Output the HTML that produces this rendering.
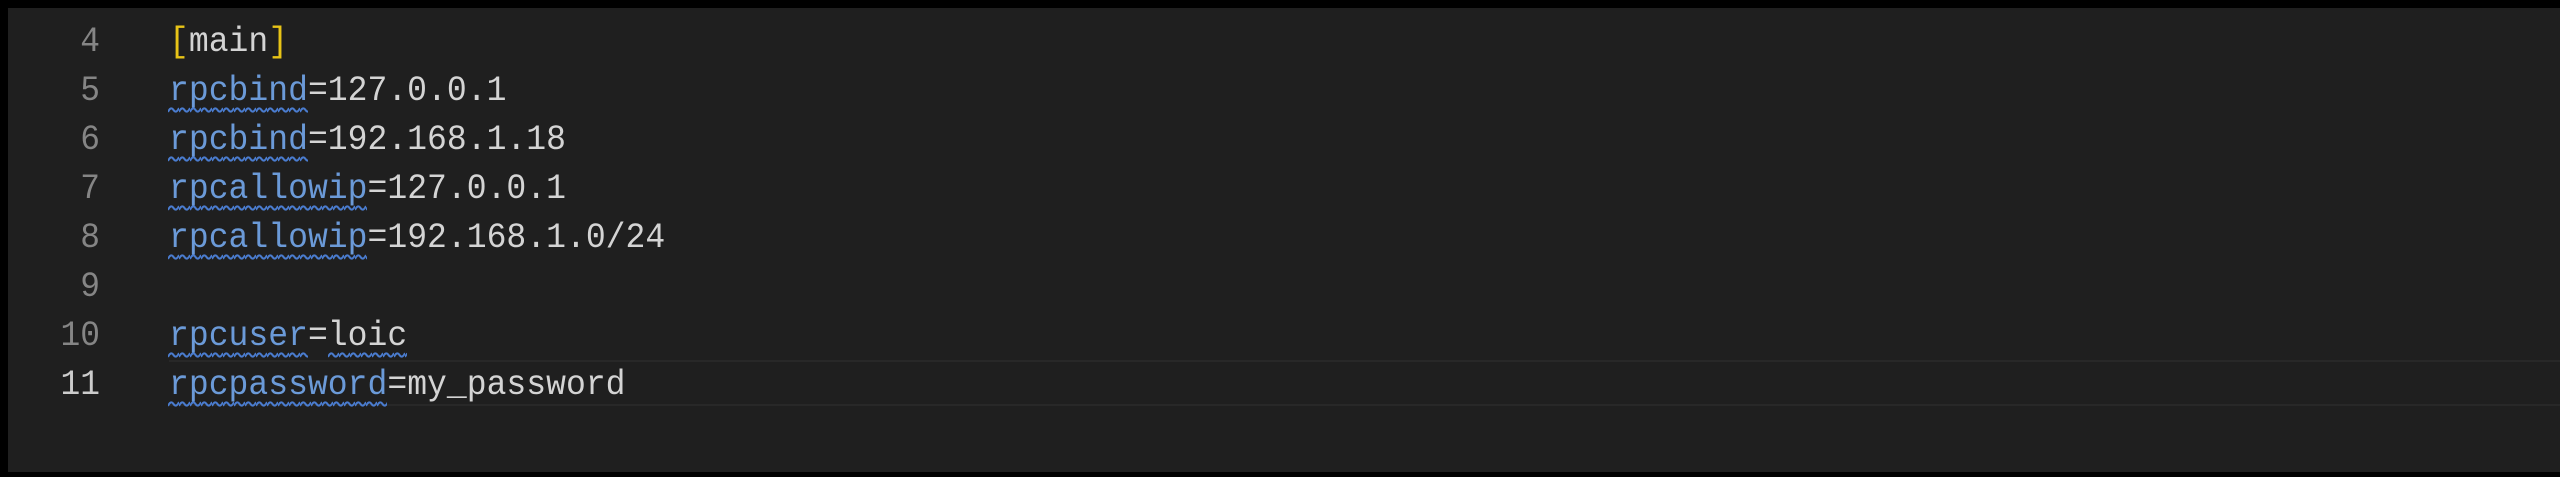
<!DOCTYPE html>
<html><head><meta charset="utf-8"><style>
html,body{margin:0;padding:0;background:#000;width:2560px;height:477px;overflow:hidden}
#p{position:absolute;left:8px;top:8px;width:2552px;height:464px;background:#1f1f1f}
.cur{position:absolute;left:169px;top:360px;width:2391px;height:42px;border-top:2px solid #282828;border-bottom:2px solid #282828}
.ln{position:absolute;width:100px;text-align:right;font-family:"Liberation Mono",monospace;font-size:35px;color:#858585;line-height:49px;transform:scaleX(0.94);transform-origin:100px 0}
.ln.c{color:#cccccc}
.t{position:absolute;left:169px;font-family:"Liberation Mono",monospace;font-size:35px;color:#d4d4d4;line-height:49px;white-space:pre;transform:scaleX(0.945);transform-origin:0 0}
.k{color:#6b9ad8}
.b{color:#e8c417}
.sq{position:absolute;height:8px;background:url("data:image/svg+xml;utf8,<svg xmlns='http://www.w3.org/2000/svg' width='11' height='8'><path d='M0 6 Q2.75 0 5.5 4 T11 2' fill='none' stroke='%234a7ccf' stroke-width='2'/></svg>") repeat-x}
</style></head><body>
<div id="p"></div>
<div class="cur"></div>
<div class="ln" style="top:18px;left:0">4</div>
<div class="ln" style="top:67px;left:0">5</div>
<div class="ln" style="top:116px;left:0">6</div>
<div class="ln" style="top:165px;left:0">7</div>
<div class="ln" style="top:214px;left:0">8</div>
<div class="ln" style="top:263px;left:0">9</div>
<div class="ln" style="top:312px;left:0">10</div>
<div class="ln c" style="top:361px;left:0">11</div>
<div class="t" style="top:18px"><span class="b">[</span>main<span class="b">]</span></div>
<div class="t" style="top:67px"><span class="k">rpcbind</span>=127.0.0.1</div>
<div class="t" style="top:116px"><span class="k">rpcbind</span>=192.168.1.18</div>
<div class="t" style="top:165px"><span class="k">rpcallowip</span>=127.0.0.1</div>
<div class="t" style="top:214px"><span class="k">rpcallowip</span>=192.168.1.0/24</div>
<div class="t" style="top:312px"><span class="k">rpcuser</span>=loic</div>
<div class="t" style="top:361px"><span class="k">rpcpassword</span>=my_password</div>
<div class="sq" style="left:168px;top:106px;width:140px"></div>
<div class="sq" style="left:168px;top:155px;width:140px"></div>
<div class="sq" style="left:168px;top:204px;width:199px"></div>
<div class="sq" style="left:168px;top:253px;width:199px"></div>
<div class="sq" style="left:168px;top:351px;width:140px"></div>
<div class="sq" style="left:328px;top:351px;width:79px"></div>
<div class="sq" style="left:168px;top:400px;width:219px"></div>
</body></html>
